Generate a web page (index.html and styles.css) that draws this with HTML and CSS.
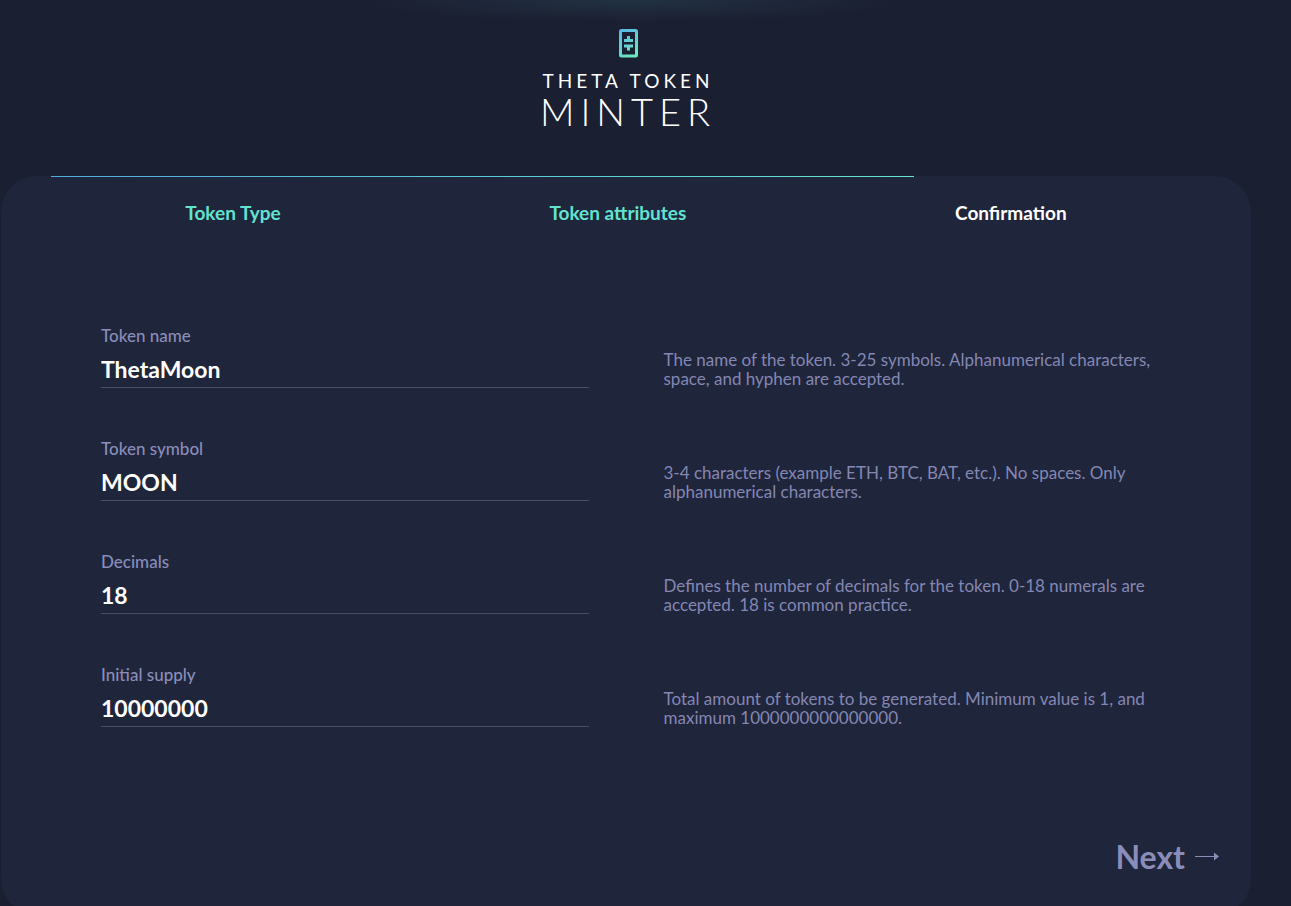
FILE: index.html
```html
<!DOCTYPE html>
<html lang="en">
<head>
  <meta charset="UTF-8">
  <meta name="viewport" content="width=device-width, initial-scale=1.0">
  <title>Theta Token Minter</title>
  <link rel="stylesheet" href="styles.css">
</head>
<body>
  <div class="page">
    <header class="logo">
      <svg class="logo-icon" width="20" height="30" viewBox="0 0 20 30" aria-hidden="true">
        <defs>
          <linearGradient id="logoGradient" x1="0" y1="0" x2="20" y2="30" gradientUnits="userSpaceOnUse">
            <stop offset="0" stop-color="#55b3ea"/>
            <stop offset="1" stop-color="#6ff0b9"/>
          </linearGradient>
        </defs>
        <rect x="2.500" y="2.500" width="16" height="25.500" rx="1" fill="none" stroke="url(#logoGradient)" stroke-width="3"/>
        <path d="M9 8h3v3h3v3H6v-3h3zM6 16.500h9v3h-3v3H9v-3H6z" fill="url(#logoGradient)"/>
      </svg>
      <h1>
        <span class="logo-top">THETA TOKEN</span>
        <span class="logo-bottom">MINTER</span>
      </h1>
    </header>

    <main class="card">
      <div class="progress"></div>
      <nav class="steps">
        <a href="#type" class="step done">Token Type</a>
        <a href="#attributes" class="step done">Token attributes</a>
        <a href="#confirmation" class="step">Confirmation</a>
      </nav>

      <form class="form">
        <div class="row">
          <div class="field">
            <label for="name">Token name</label>
            <input type="text" id="name" value="ThetaMoon" aria-describedby="nameHint">
          </div>
          <p class="hint" id="nameHint">The name of the token. 3-25 symbols. Alphanumerical characters, space, and hyphen are accepted.</p>
        </div>
        <div class="row">
          <div class="field">
            <label for="symbol">Token symbol</label>
            <input type="text" id="symbol" value="MOON" aria-describedby="symbolHint">
          </div>
          <p class="hint" id="symbolHint">3-4 characters (example ETH, BTC, BAT, etc.). No spaces. Only alphanumerical characters.</p>
        </div>
        <div class="row">
          <div class="field">
            <label for="decimals">Decimals</label>
            <input type="text" id="decimals" value="18" aria-describedby="decimalsHint">
          </div>
          <p class="hint" id="decimalsHint">Defines the number of decimals for the token. 0-18 numerals are accepted. 18 is common practice.</p>
        </div>
        <div class="row">
          <div class="field">
            <label for="supply">Initial supply</label>
            <input type="text" id="supply" value="10000000" aria-describedby="supplyHint">
          </div>
          <p class="hint" id="supplyHint">Total amount of tokens to be generated. Minimum value is 1, and maximum 1000000000000000.</p>
        </div>
      </form>

      <button type="button" class="next">
        Next
        <svg width="24" height="10" viewBox="0 0 24 10" aria-hidden="true">
          <path d="M0 4.500h21" stroke="currentColor" fill="none"/>
          <path d="M19 0.500l5 4-5 4z" fill="currentColor"/>
        </svg>
      </button>
    </main>
  </div>
</body>
</html>
```

FILE: styles.css
```css
* {
  box-sizing: border-box;
}
body {
  margin: 0;
  background: #1b1f32;
  color: #fff;
  font-family: Lato, "Open Sans", sans-serif;
}
.page {
  padding: 0 40px 20px 1px;
  background: radial-gradient(270px 22px at 49% 0, #213242, #1b1f32) no-repeat;
}
.logo {
  padding: 28px 0 0 4px;
  height: 176px;
  text-align: center;
}
.logo-icon {
  display: block;
  margin: 0 auto;
}
.logo h1 {
  margin: 11px 0 0;
}
.logo-top,
.logo-bottom {
  display: block;
}
.logo-top {
  font-size: 19px;
  line-height: 24px;
  font-weight: 400;
  letter-spacing: 4px;
}
.logo-bottom {
  font-size: 38px;
  line-height: 36px;
  font-weight: 300;
  letter-spacing: 6px;
}
.card {
  display: flex;
  flex-direction: column;
  background: #1f253a;
  border-radius: 36px;
  padding: 0 50px 38px;
}
.progress {
  width: 75%;
  height: 1px;
  background: linear-gradient(90deg, #4fadde, #66e3d0);
}
.steps {
  display: flex;
  justify-content: space-around;
  padding-top: 24px;
}
.step {
  color: #fff;
  font-size: 19px;
  line-height: 24px;
  font-weight: 700;
  text-decoration: none;
}
.done {
  color: #62e3d0;
}
.form {
  padding: 100px 50px 0;
}
.row {
  display: grid;
  grid-template-columns: 1fr 1fr;
  gap: 75px;
  margin-bottom: 50px;
}
.field label {
  display: block;
  color: #8a8dba;
  font-size: 17px;
  line-height: 22px;
  font-weight: 500;
}
.field input {
  display: block;
  width: 100%;
  height: 41px;
  padding: 4px 0 0;
  border: 0;
  border-bottom: 1px solid #494d66;
  background: none;
  color: #fff;
  font: 700 23px/30px Lato, "Open Sans", sans-serif;
  outline: none;
}
.hint {
  margin: 25px 0 0;
  color: #8487b3;
  font-size: 17px;
  line-height: 19px;
  font-weight: 400;
}
.next {
  display: flex;
  align-items: center;
  align-self: flex-end;
  gap: 10px;
  margin: 60px -18px 0 0;
  padding: 0;
  border: 0;
  background: none;
  color: #8a8dba;
  font: 700 32px/40px Lato, "Open Sans", sans-serif;
  cursor: pointer;
}
```
